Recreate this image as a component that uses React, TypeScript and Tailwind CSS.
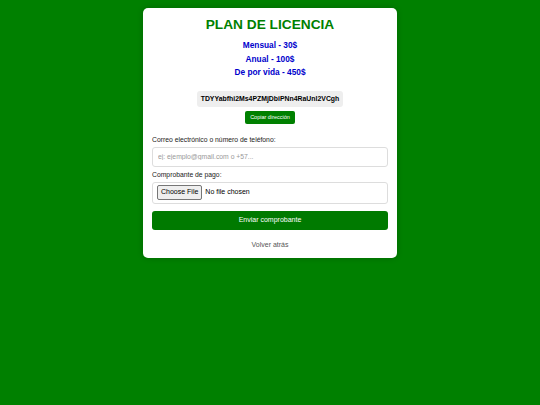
export default function App() {
  return (
    <div className="min-h-[405px] bg-[#008000] pt-[8px] font-['Liberation_Sans',Arial,sans-serif]">
      <div className="mx-auto w-[254px] rounded-[5px] bg-white px-[9px] pt-[8px] pb-[9px] shadow-[0_0_6px_rgba(0,0,0,0.2)]">
        <h1 className="text-center text-[13.7px] leading-[18px] font-bold text-[#008000]">PLAN DE LICENCIA</h1>

        <div className="mt-[5px] text-center text-[8.3px] leading-[13.5px] font-bold text-[#0000cc]">
          <p>Mensual - 30$</p>
          <p>Anual - 100$</p>
          <p>De por vida - 450$</p>
        </div>

        <div className="mt-[11px] flex flex-col items-center">
          <div className="rounded-[3px] bg-[#eeeeee] px-[4px] py-[4px] text-[6.9px] leading-[8px] font-bold text-black">
            TDYYabfhi2Ms4PZMjDbiPNn4RaUnl2VCgh
          </div>
          <button className="mt-[4px] h-[13px] rounded-[2px] bg-[#008000] px-[5px] text-[5.5px] leading-[13px] text-white">
            Copiar dirección
          </button>
        </div>

        <form className="mt-[11px]" onSubmit={(e) => e.preventDefault()}>
          <label className="block text-[6.8px] leading-[9px] text-[#222]">Correo electrónico o número de teléfono:</label>
          <input
            type="text"
            placeholder="ej: ejemplo@gmail.com o +57..."
            className="mt-[3px] block h-[20px] w-full rounded-[3px] border border-[#dddddd] px-[5px] text-[6.8px] outline-none placeholder:text-[#999]"
          />

          <label className="mt-[3px] block text-[6.8px] leading-[9px] text-[#222]">Comprobante de pago:</label>
          <div className="mt-[3px] flex h-[22px] items-center rounded-[3px] border border-[#dddddd] px-[4px]">
            <input
              type="file"
              className="text-[7px] text-black file:mr-[3px] file:rounded-[2px] file:border file:border-[#767676] file:bg-[#efefef] file:px-[3px] file:py-[1px] file:text-[7px] file:text-black"
            />
          </div>

          <button
            type="submit"
            className="mt-[7px] block h-[19px] w-full rounded-[3px] bg-[#007a00] text-[7px] text-white"
          >
            Enviar comprobante
          </button>
        </form>

        <p className="mt-[10px] text-center text-[7px] leading-[9px] text-[#555]">Volver atrás</p>
      </div>
    </div>
  );
}
